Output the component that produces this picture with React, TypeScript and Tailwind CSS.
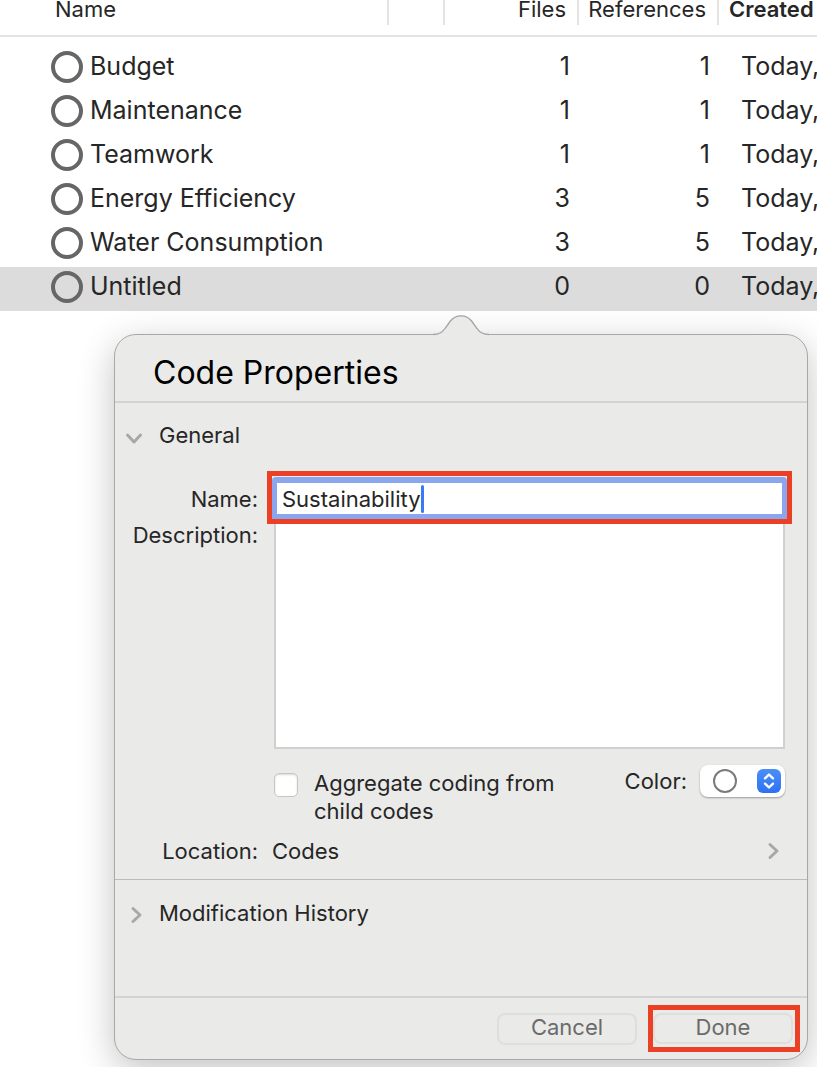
import { useState } from "react";

type Code = { name: string; files: number; references: number; created: string };

const codes: Code[] = [
  { name: "Budget", files: 1, references: 1, created: "Today," },
  { name: "Maintenance", files: 1, references: 1, created: "Today," },
  { name: "Teamwork", files: 1, references: 1, created: "Today," },
  { name: "Energy Efficiency", files: 3, references: 5, created: "Today," },
  { name: "Water Consumption", files: 3, references: 5, created: "Today," },
  { name: "Untitled", files: 0, references: 0, created: "Today," },
];

function CodeTable() {
  return (
    <table className="w-full table-fixed border-collapse text-[25px] leading-8">
      <colgroup>
        <col />
        <col className="w-14" />
        <col className="w-[134px]" />
        <col className="w-[140px]" />
        <col className="w-[98px]" />
      </colgroup>
      <thead className="text-[22px] leading-[18px]">
        <tr className="h-9 border-b-2 border-[#e4e4e4] text-left align-top">
          <th className="p-0 font-normal">
            <div className="h-[25px] border-r-2 border-[#e4e4e4] pl-[55px]">Name</div>
          </th>
          <td className="p-0">
            <div className="h-[25px] border-r-2 border-[#e4e4e4]" />
          </td>
          <th className="p-0 text-right font-normal">
            <div className="h-[25px] border-r-2 border-[#e4e4e4] pr-[11px]">Files</div>
          </th>
          <th className="p-0 text-right font-normal">
            <div className="h-[25px] border-r-2 border-[#e4e4e4] pr-[11px]">References</div>
          </th>
          <th className="p-0 font-semibold">
            <div className="h-[25px] pl-[10px]">Created</div>
          </th>
        </tr>
      </thead>
      <tbody>
        <tr aria-hidden="true" className="h-[11px]" />
        {codes.map((code) => (
          <tr key={code.name} className={code.name === "Untitled" ? "h-11 bg-[#dcdcdc]" : "h-11"}>
            <td className="p-0 pb-1">
              <div className="flex items-center gap-[7px] pl-[51px]">
                <span className="size-8 shrink-0 rounded-full border-4 border-[#666666]" />
                <span className="-mt-0.5 whitespace-nowrap">{code.name}</span>
              </div>
            </td>
            <td className="p-0" />
            <td className="p-0 pr-[9px] pb-[6px] text-right">{code.files}</td>
            <td className="p-0 pr-[9px] pb-[6px] text-right">{code.references}</td>
            <td className="p-0 pb-[6px] pl-[22px] whitespace-nowrap">{code.created}</td>
          </tr>
        ))}
      </tbody>
    </table>
  );
}

function Chevron({ down = false }: { down?: boolean }) {
  return (
    <svg
      viewBox="0 0 20 20"
      className={down ? "size-5 rotate-90" : "size-5"}
      fill="none"
      stroke="#a8a8a6"
      strokeWidth="3"
      strokeLinecap="round"
      strokeLinejoin="round"
      aria-hidden="true"
    >
      <path d="M7 3.5l7 6.5-7 6.5" />
    </svg>
  );
}

function PopoverArrow() {
  return (
    <svg
      width="56"
      height="21"
      viewBox="0 0 56 21"
      className="absolute -top-5 left-1/2 -translate-x-1/2"
      aria-hidden="true"
    >
      <path
        d="M0 21V19.5C6 19.5 9 18 12 13.500L17 6.500C20 2.500 23 .8 28 .8S36 2.500 39 6.500L44 13.500C47 18 50 19.500 56 19.500V21Z"
        fill="#eaeae8"
      />
      <path
        d="M0 19.500C6 19.500 9 18 12 13.500L17 6.500C20 2.500 23 .8 28 .8S36 2.500 39 6.500L44 13.500C47 18 50 19.500 56 19.500"
        fill="none"
        stroke="#a4a4a4"
        strokeWidth="1.3"
      />
    </svg>
  );
}

export default function App() {
  const [name, setName] = useState("Sustainability");

  return (
    <main className="min-h-screen overflow-hidden bg-white font-['Inter',sans-serif] text-[#262626]">
      <CodeTable />

      <section
        aria-labelledby="popover-title"
        className="relative mt-[23px] mr-[9px] mb-[7px] ml-[114px] rounded-[22px] border border-[#a8a8a8] bg-[#eaeae8] text-[22px] leading-7 shadow-[0_10px_36px_rgba(0,0,0,0.24)]"
      >
        <PopoverArrow />
        <h2
          id="popover-title"
          className="border-b-2 border-[#d3d3d1] pt-[18px] pb-2 pl-[38px] text-[32px] leading-10 text-black"
        >
          Code Properties
        </h2>

        <div className="border-b border-[#bcbcba] pb-[14px]">
          <button type="button" aria-expanded="true" className="flex h-[68px] items-start gap-[15px] pt-[18px] pl-[9px]">
            <span className="pt-[7px]">
              <Chevron down />
            </span>
            General
          </button>

          <div className="grid grid-cols-[143px_1fr] gap-x-[9px] pr-[15px]">
            <label htmlFor="code-name" className="pt-[14px] text-right">
              Name:
            </label>
            <div className="border-[5px] border-[#eb4025]">
              <div className="mt-px flex h-[42px] items-center rounded-t border-x-[5px] border-t-[6px] border-b-[5px] border-[#8aa6ee] bg-white pl-[5px]">
                <input
                  id="code-name"
                  value={name}
                  onChange={(event) => setName(event.target.value)}
                  className="field-sizing-content h-7 max-w-full bg-transparent p-0 outline-none"
                />
                <span className="h-7 w-[3px] rounded-sm bg-[#397bf5]" />
              </div>
            </div>

            <label htmlFor="code-description" className="-mt-[3px] text-right">
              Description:
            </label>
            <textarea
              id="code-description"
              className="mx-[7px] h-[225px] resize-none border-2 border-t-0 border-[#d0d0ce] bg-white p-2 outline-none"
            />
          </div>

          <div className="flex items-start justify-between pt-5 pr-[22px] pl-[159px]">
            <label className="flex items-start gap-4">
              <input
                type="checkbox"
                className="mt-1 size-6 shrink-0 appearance-none rounded-[5px] border border-[#c6c6c4] bg-white shadow-[inset_0_1px_2px_rgba(0,0,0,0.15)] checked:bg-[#397bf5]"
              />
              <span className="w-[250px]">Aggregate coding from child codes</span>
            </label>
            <div className="-mt-1 flex items-center gap-[13px]">
              <label htmlFor="code-color">Color:</label>
              <div className="relative">
                <select
                  id="code-color"
                  className="block h-8 w-[85px] appearance-none rounded-lg bg-white shadow-[0_1px_2px_rgba(0,0,0,0.35)] outline-none"
                >
                  <option value="" aria-label="No color" />
                </select>
                <div className="pointer-events-none absolute inset-0 flex items-center justify-between pr-1 pl-[13px]">
                  <span className="size-6 rounded-full border-2 border-[#7b7b7b]" />
                  <svg viewBox="0 0 24 24" className="size-6 rounded-md bg-linear-to-b from-[#4a8ff8] to-[#2f71f3]" aria-hidden="true">
                    <path
                      d="M8 9.300L12 5.500l4 3.800M8 14.700l4 3.800 4-3.800"
                      fill="none"
                      stroke="white"
                      strokeWidth="2.400"
                      strokeLinecap="round"
                      strokeLinejoin="round"
                    />
                  </svg>
                </div>
              </div>
            </div>
          </div>

          <button type="button" className="flex w-full items-center pt-3 pr-6 text-left">
            <span className="w-[143px] text-right">Location:</span>
            <span className="flex-1 pl-[14px]">Codes</span>
            <Chevron />
          </button>
        </div>

        <button type="button" aria-expanded="false" className="flex h-[116px] items-start gap-[13px] pt-[19px] pl-[11px]">
          <span className="pt-[6px]">
            <Chevron />
          </span>
          Modification History
        </button>

        <footer className="flex items-start justify-end gap-[11px] border-t-2 border-[#d3d3d1] py-[7px] pr-[7px] text-[#6b6b6b]">
          <button type="button" className="mt-2 h-8 w-[140px] rounded-lg border-2 border-[#dededc] pb-1 leading-6">
            Cancel
          </button>
          <div className="border-[5px] border-[#eb4025] py-[3px] pr-[2px]">
            <button type="button" className="block h-[31px] w-[140px] rounded-lg border-2 border-[#dededc] pb-1 leading-6">
              Done
            </button>
          </div>
        </footer>
      </section>
    </main>
  );
}
